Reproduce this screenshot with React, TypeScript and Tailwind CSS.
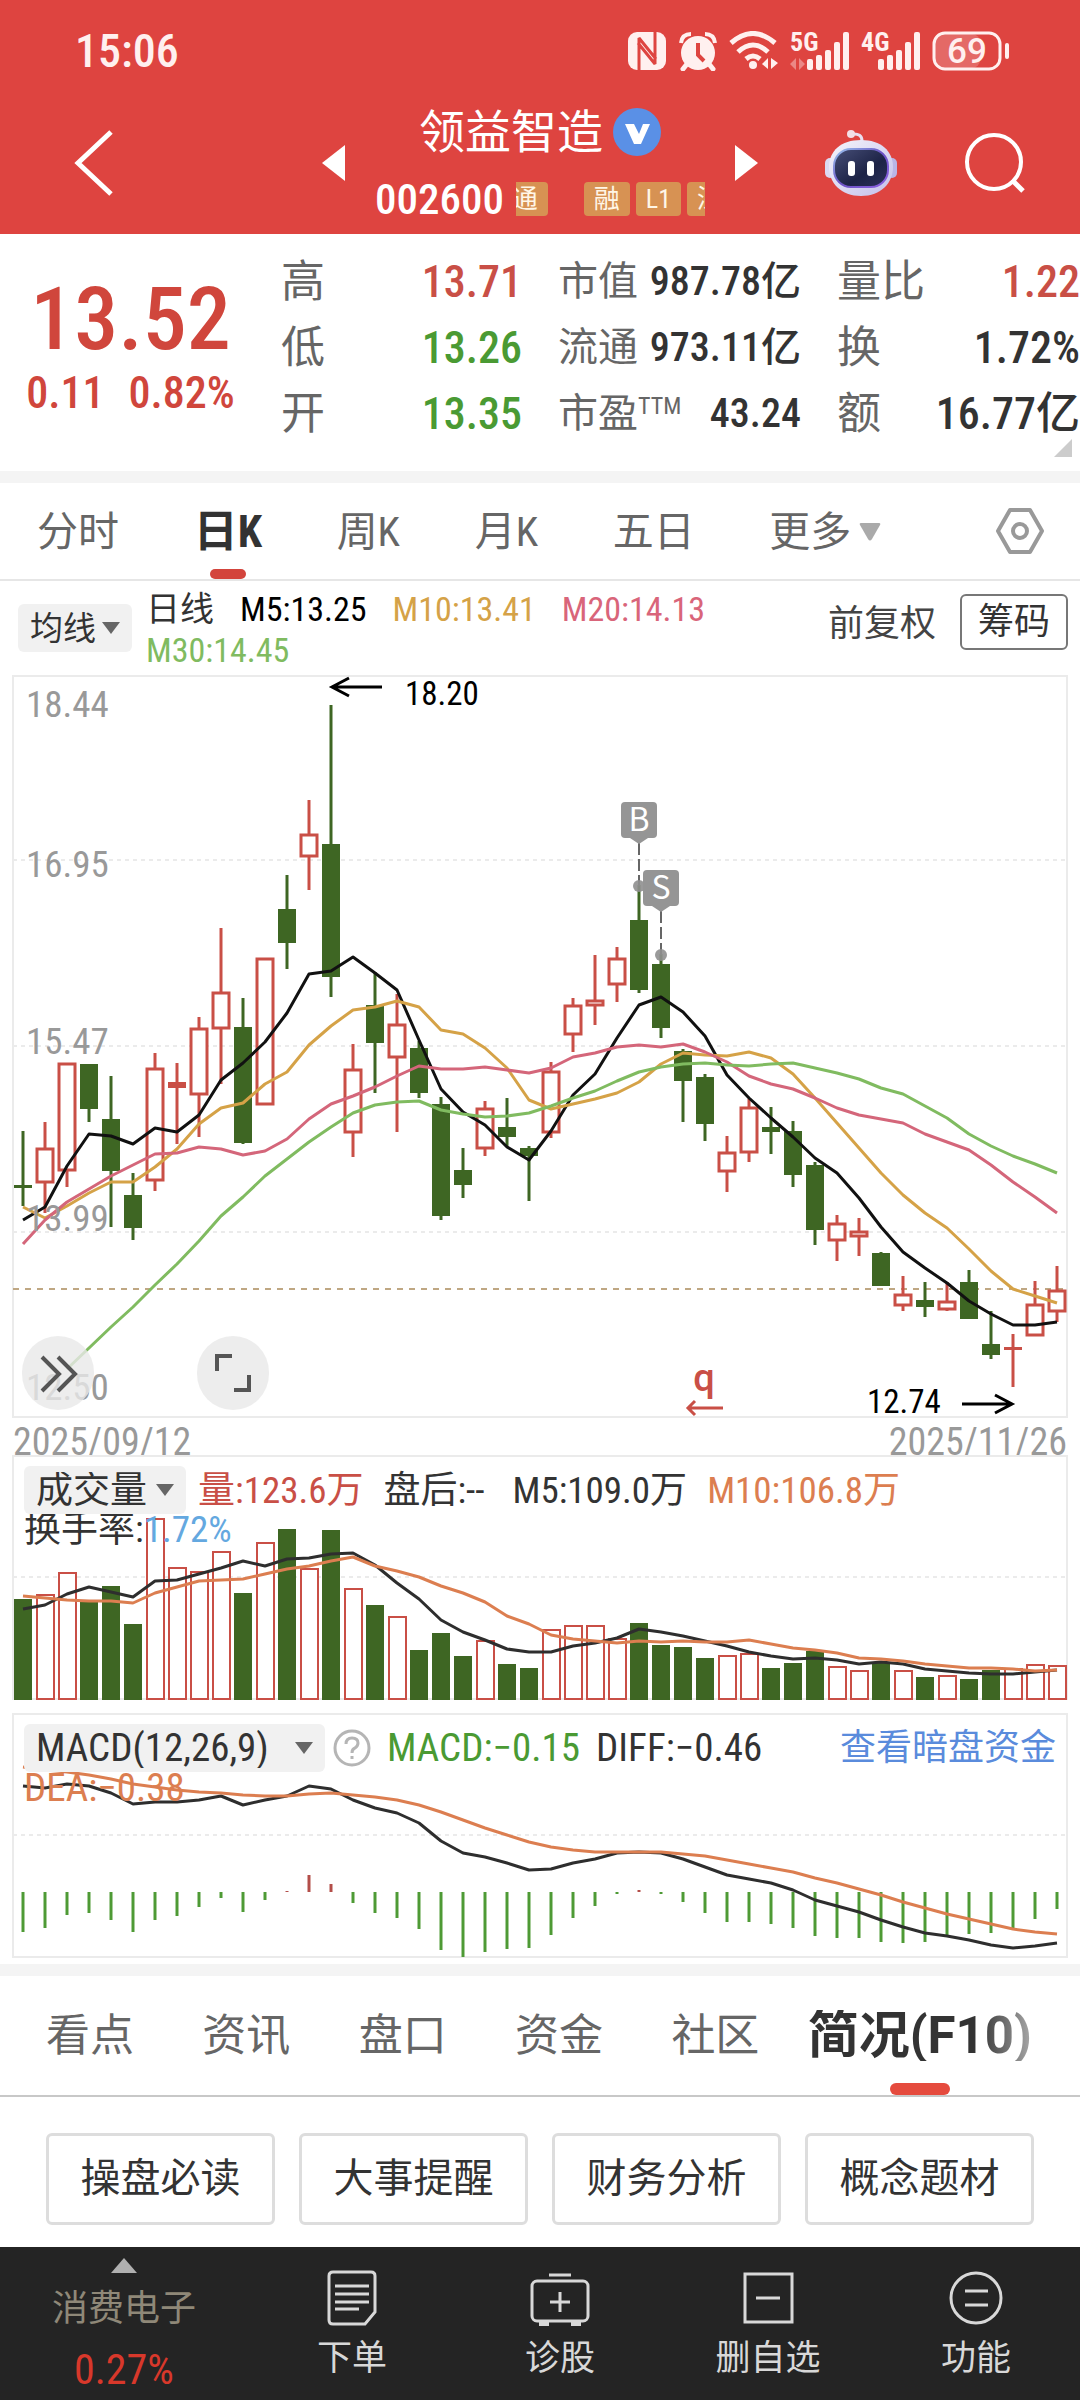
import type { ReactNode } from 'react';

type Candle = [up: 0 | 1, high: number, top: number, bottom: number, low: number];

const candles: Candle[] = [
  [0, 1131, 1185, 1188, 1206], [1, 1122, 1147, 1183, 1213], [1, 1062, 1062, 1171, 1187], [0, 1064, 1064, 1109, 1122],
  [0, 1076, 1119, 1171, 1227], [0, 1173, 1195, 1228, 1240], [1, 1053, 1067, 1181, 1191], [1, 1063, 1082, 1088, 1144],
  [1, 1017, 1027, 1095, 1137], [1, 928, 991, 1029, 1084], [0, 998, 1027, 1143, 1144], [1, 957, 957, 1105, 1105],
  [0, 875, 909, 943, 969], [1, 800, 833, 857, 890], [0, 705, 844, 977, 997], [1, 1044, 1068, 1133, 1157],
  [0, 972, 1005, 1043, 1093], [1, 994, 1023, 1058, 1132], [0, 1041, 1048, 1093, 1098], [0, 1097, 1104, 1216, 1220],
  [0, 1148, 1170, 1185, 1198], [1, 1101, 1107, 1149, 1156], [0, 1098, 1127, 1137, 1147], [0, 1146, 1148, 1156, 1201],
  [1, 1062, 1070, 1133, 1138], [1, 998, 1004, 1035, 1052], [1, 955, 999, 1006, 1025], [1, 947, 957, 985, 1002],
  [0, 885, 920, 990, 993], [0, 954, 964, 1028, 1038], [0, 1049, 1051, 1081, 1122], [0, 1074, 1077, 1124, 1141],
  [1, 1136, 1151, 1172, 1192], [1, 1099, 1106, 1153, 1162], [0, 1107, 1127, 1132, 1154], [0, 1121, 1131, 1175, 1187],
  [0, 1162, 1165, 1230, 1245], [1, 1215, 1222, 1241, 1261], [1, 1218, 1230, 1237, 1256], [0, 1252, 1253, 1286, 1286],
  [1, 1276, 1293, 1306, 1311], [0, 1282, 1300, 1307, 1317], [1, 1282, 1300, 1310, 1311], [0, 1270, 1282, 1319, 1319],
  [0, 1311, 1344, 1355, 1359], [1, 1334, 1347, 1350, 1387], [1, 1281, 1303, 1336, 1336], [1, 1266, 1289, 1312, 1322],
];

const m5 = [1220, 1207, 1166, 1134, 1136, 1144, 1128, 1132, 1115, 1080, 1063, 1042, 1013, 974, 971, 957, 973, 990, 1040, 1089, 1112, 1125, 1147, 1160, 1131, 1095, 1074, 1038, 1005, 997, 1012, 1036, 1075, 1098, 1118, 1137, 1158, 1173, 1198, 1227, 1252, 1268, 1283, 1301, 1314, 1325, 1325, 1322];
const m10 = [1207, 1218, 1206, 1193, 1182, 1182, 1167, 1149, 1124, 1108, 1103, 1084, 1072, 1045, 1026, 1010, 1007, 1001, 1007, 1030, 1034, 1048, 1068, 1100, 1109, 1104, 1099, 1093, 1082, 1064, 1053, 1055, 1056, 1052, 1058, 1074, 1098, 1123, 1148, 1173, 1195, 1213, 1228, 1249, 1271, 1289, 1296, 1303];
const m20 = [1244, 1220, 1202, 1189, 1176, 1165, 1154, 1153, 1147, 1149, 1155, 1151, 1139, 1119, 1104, 1096, 1087, 1076, 1066, 1069, 1069, 1067, 1070, 1073, 1068, 1057, 1053, 1047, 1045, 1047, 1044, 1052, 1062, 1076, 1084, 1089, 1098, 1108, 1115, 1119, 1123, 1134, 1142, 1150, 1165, 1182, 1197, 1213];
const m30 = [1369, 1348, 1327, 1307, 1285, 1264, 1241, 1216, 1197, 1176, 1159, 1142, 1127, 1113, 1105, 1102, 1101, 1110, 1114, 1117, 1116, 1113, 1106, 1098, 1091, 1081, 1072, 1067, 1064, 1063, 1065, 1066, 1064, 1063, 1068, 1073, 1079, 1088, 1094, 1106, 1118, 1134, 1146, 1156, 1164, 1173];

const volume = [1599, 1595, 1573, 1601, 1586, 1624, 1519, 1568, 1572, 1552, 1593, 1543, 1529, 1569, 1530, 1589, 1605, 1617, 1650, 1633, 1656, 1641, 1664, 1668, 1630, 1626, 1626, 1639, 1623, 1645, 1647, 1658, 1656, 1654, 1668, 1663, 1651, 1667, 1671, 1663, 1671, 1677, 1676, 1679, 1670, 1669, 1665, 1666];
const v5 = [1609, 1605, 1594, 1587, 1592, 1597, 1581, 1580, 1574, 1568, 1561, 1566, 1559, 1558, 1554, 1553, 1565, 1583, 1599, 1620, 1632, 1640, 1649, 1652, 1652, 1646, 1643, 1638, 1629, 1632, 1636, 1641, 1646, 1652, 1656, 1659, 1658, 1660, 1664, 1662, 1664, 1669, 1671, 1673, 1674, 1674, 1672, 1670];
const v10 = [1596, 1598, 1600, 1601, 1601, 1603, 1593, 1587, 1581, 1580, 1579, 1574, 1569, 1566, 1561, 1557, 1566, 1571, 1577, 1586, 1593, 1602, 1616, 1624, 1635, 1639, 1641, 1643, 1641, 1642, 1641, 1642, 1642, 1640, 1644, 1648, 1650, 1653, 1658, 1659, 1661, 1664, 1666, 1668, 1668, 1669, 1671, 1670];

const macd = [1932, 1928, 1915, 1913, 1920, 1932, 1920, 1916, 1907, 1898, 1912, 1900, 1891, 1875, 1884, 1903, 1913, 1918, 1929, 1950, 1957, 1952, 1949, 1948, 1935, 1918, 1906, 1894, 1890, 1894, 1902, 1913, 1922, 1922, 1924, 1928, 1936, 1938, 1938, 1942, 1943, 1942, 1937, 1934, 1933, 1929, 1919, 1909];
const diff = [1786, 1788, 1784, 1786, 1793, 1804, 1802, 1802, 1800, 1796, 1805, 1800, 1796, 1786, 1789, 1800, 1808, 1813, 1823, 1841, 1853, 1857, 1863, 1870, 1869, 1863, 1859, 1853, 1852, 1853, 1859, 1867, 1875, 1879, 1883, 1890, 1900, 1906, 1912, 1920, 1927, 1933, 1936, 1940, 1945, 1948, 1946, 1943];
const dea = [1767, 1770, 1772, 1775, 1779, 1784, 1787, 1790, 1792, 1793, 1795, 1796, 1796, 1794, 1793, 1795, 1797, 1800, 1805, 1812, 1820, 1828, 1835, 1842, 1847, 1850, 1852, 1852, 1852, 1852, 1854, 1856, 1860, 1864, 1868, 1872, 1878, 1883, 1889, 1895, 1902, 1908, 1914, 1919, 1924, 1929, 1932, 1934];

const RED = '#c94f46';
const GREEN = '#3e6623';
const FRAME = '#ebebeb';

const xAt = (i: number) => 23 + i * 22;
const points = (ys: number[], from = 0) => ys.map((y, i) => `${xAt(i + from)},${y}`).join(' ');

function Line({ ys, color, from }: { ys: number[]; color: string; from?: number }) {
  return <polyline points={points(ys, from)} fill="none" stroke={color} strokeWidth="3" strokeLinejoin="round" />;
}

function Grid({ y }: { y: number }) {
  return <line x1="13" x2="1067" y1={y} y2={y} stroke={FRAME} strokeWidth="2" strokeDasharray="4 4" />;
}

function Marker({ x, y, dot, label }: { x: number; y: number; dot: number; label: string }) {
  return (
    <g>
      <line x1={x} x2={x} y1={y + 41} y2={dot} stroke="#666" strokeWidth="2" strokeDasharray="12 4" />
      <circle cx={x} cy={dot} r="6" fill="#8f8f8f" fillOpacity="0.9" />
      <rect x={x - 18} y={y} width="36" height="36" rx="4" fill="#959595" />
      <path d={`M${x - 9} ${y + 36}h18l-9 6z`} fill="#959595" />
      <text x={x} y={y + 29} textAnchor="middle" fontSize="32" fill="#fff" className="font-['Noto_Sans_CJK_SC',sans-serif]">{label}</text>
    </g>
  );
}

function PriceChart() {
  return (
    <svg viewBox="0 675 1080 743" className="block h-auto w-full" role="img" aria-label="日K线图">
      <rect x="13" y="676" width="1054" height="741" fill="none" stroke={FRAME} strokeWidth="2" />
      <Grid y={860} />
      <Grid y={1046} />
      <Grid y={1232} />
      <line x1="13" x2="1067" y1="1289" y2="1289" stroke="#bfa783" strokeWidth="2" strokeDasharray="6 6" />
      {candles.map(([up, high, top, bottom, low], i) => {
        const x = xAt(i);
        const color = up ? RED : GREEN;
        const hollow = up === 1 && bottom - top > 6;
        return (
          <g key={i}>
            {high < top && <line x1={x} x2={x} y1={high} y2={top + 1} stroke={color} strokeWidth="3" />}
            {low > bottom && <line x1={x} x2={x} y1={bottom - 1} y2={low} stroke={color} strokeWidth="3" />}
            {hollow ? (
              <rect x={x - 8} y={top + 2} width="16" height={bottom - top - 3} fill="#fff" stroke={color} strokeWidth="3" />
            ) : (
              <rect x={x - 9} y={top} width="18" height={bottom - top} fill={color} />
            )}
          </g>
        );
      })}
      <Line ys={m5} color="#111" />
      <Line ys={m10} color="#d5a247" />
      <Line ys={m20} color="#d4667a" />
      <Line ys={m30} color="#80bb60" from={2} />
      <g fontSize="37" fill="#999" className="font-['Roboto_Condensed','Noto_Sans_CJK_SC',sans-serif]">
        <text x="26" y="717">18.44</text>
        <text x="26" y="877">16.95</text>
        <text x="26" y="1054">15.47</text>
        <text x="26" y="1231">13.99</text>
        <text x="26" y="1400">12.50</text>
      </g>
      <g fontSize="33" fill="#000" className="font-['Roboto_Condensed','Noto_Sans_CJK_SC',sans-serif]">
        <text x="405" y="705">18.20</text>
        <text x="867" y="1413">12.74</text>
      </g>
      <g fill="none" stroke="#000" strokeWidth="3">
        <path d="M382 687H332M349 678l-17 9 17 9" />
        <path d="M962 1404h50M995 1395l17 9-17 9" />
      </g>
      <text x="704" y="1391" textAnchor="middle" fontSize="38" fontWeight="500" fill={RED} className="font-['Roboto',sans-serif]">q</text>
      <path d="M723 1408h-35M695 1401l-7 7 7 7" fill="none" stroke={RED} strokeWidth="3" />
      <Marker x={639} y={802} dot={886} label="B" />
      <Marker x={661} y={870} dot={955} label="S" />
    </svg>
  );
}

function VolumeChart() {
  return (
    <svg viewBox="0 1455 1080 258" className="block h-auto w-full" role="img" aria-label="成交量图">
      <path d="M13 1700V1456H1067V1700M13 1699H1067" fill="none" stroke={FRAME} strokeWidth="2" />
      <Grid y={1577} />
      {volume.map((y, i) =>
        candles[i][0] ? (
          <rect key={i} x={xAt(i) - 8} y={y} width="17" height={1699 - y} fill="#fff" stroke={RED} strokeWidth="2" />
        ) : (
          <rect key={i} x={xAt(i) - 9} y={y} width="18" height={1700 - y} fill={GREEN} />
        ),
      )}
      <Line ys={v5} color="#2e2e2e" />
      <Line ys={v10} color="#dc7e50" />
    </svg>
  );
}

function MacdChart() {
  return (
    <svg viewBox="0 1713 1080 251" className="block h-auto w-full" role="img" aria-label="MACD图">
      <rect x="13" y="1714" width="1054" height="243" fill="none" stroke={FRAME} strokeWidth="2" />
      <Grid y={1835} />
      {macd.map((y, i) => (
        <line key={i} x1={xAt(i)} x2={xAt(i)} y1="1892" y2={y} stroke={y < 1892 ? '#b34e49' : '#4e9a35'} strokeWidth="3" />
      ))}
      <Line ys={diff} color="#2e2e2e" />
      <Line ys={dea} color="#dc7e50" />
    </svg>
  );
}

function Picker({ label, width }: { label: string; width: string }) {
  return (
    <span className={`relative flex h-12 shrink-0 items-center ${width}`}>
      <select aria-label={label} className="h-full w-full appearance-none rounded-md bg-[#f1f1f1] pl-3 text-[#333] outline-none">
        <option>{label}</option>
      </select>
      <svg viewBox="0 0 18 12" className="pointer-events-none absolute right-3 h-3 w-[18px]" fill="#666"><path d="M0 0h18l-9 12z" /></svg>
    </span>
  );
}

function Signal({ label, faint }: { label: string; faint?: boolean }) {
  return (
    <svg viewBox="0 0 60 40" className="h-10 w-[60px] overflow-visible" fill="#fff0ef" aria-label={label}>
      <text x="0" y="20" fontSize="26" fontWeight="700" className="font-['Roboto_Condensed',sans-serif]">{label}</text>
      {faint && <path d="M0 33l6-6v12M9 27v12l6-6z" opacity="0.4" />}
      <rect x="17" y="28" width="6" height="11" rx="2" />
      <rect x="26" y="24" width="6" height="15" rx="2" />
      <rect x="35" y="19" width="6" height="20" rx="2" />
      <rect x="44" y="11" width="6" height="28" rx="2" />
      <rect x="53" y="1" width="6" height="38" rx="2" />
    </svg>
  );
}

function StatusBar() {
  return (
    <div className="flex h-[102px] items-center justify-between pl-[75px] pr-[70px] text-[#fff0ef]">
      <time className="text-[46px] font-medium leading-none">15:06</time>
      <div className="flex items-center gap-[11px]">
        <svg viewBox="0 0 40 40" className="h-10 w-10" aria-label="NFC">
          <rect x="1" y="1" width="38" height="38" rx="9" fill="#fff0ef" />
          <path d="M12 39V7l17 21M28 1v32L11 12" fill="none" stroke="#de4440" strokeWidth="3" strokeLinejoin="bevel" />
        </svg>
        <svg viewBox="0 0 40 40" className="h-10 w-10" aria-label="闹钟">
          <circle cx="20" cy="22" r="17" fill="#fff0ef" />
          <path d="M3 12q1-9 10-9M37 12q-1-9-10-9" fill="none" stroke="#fff0ef" strokeWidth="4" />
          <path d="M9 33l-4 5M31 33l4 5" stroke="#fff0ef" strokeWidth="5" strokeLinecap="round" />
          <path d="M20 12v12l6 6" fill="none" stroke="#de4440" strokeWidth="4" />
        </svg>
        <svg viewBox="0 0 50 40" className="h-10 w-[50px]" fill="none" stroke="#fff0ef" strokeWidth="5" aria-label="Wi-Fi">
          <path d="M2 12q22-19 44 0M9 21q15-14 30 0M17 28q7-6 14 0" />
          <circle cx="24" cy="34" r="4" fill="#fff0ef" stroke="none" />
          <path d="M33 33l6-6v11zM42 27v11l7-6z" fill="#fff0ef" stroke="none" />
        </svg>
        <Signal label="5G" faint />
        <Signal label="4G" />
        <svg viewBox="0 0 78 40" className="h-10 w-[78px]" aria-label="电量69">
          <rect x="2" y="3" width="46" height="34" rx="8" fill="#fff" opacity="0.2" />
          <rect x="2" y="2" width="66" height="36" rx="11" fill="none" stroke="#fff0ef" strokeWidth="3" />
          <path d="M75 14v12" stroke="#fff0ef" strokeWidth="4" strokeLinecap="round" />
          <text x="35" y="32" textAnchor="middle" fontSize="35" fontWeight="500" fill="#fff0ef" className="font-['Roboto',sans-serif]">69</text>
        </svg>
      </div>
    </div>
  );
}

function Tag({ children }: { children: ReactNode }) {
  return <span className="flex h-[34px] shrink-0 items-center whitespace-nowrap rounded-sm bg-[#d79253] px-2.5 text-[26px] leading-none text-[#fff6e6]">{children}</span>;
}

function TitleBar() {
  return (
    <div className="grid grid-cols-[1fr_auto_1fr] items-center pb-3.5 pt-1">
      <button aria-label="返回" className="ml-[74px] w-10">
        <svg viewBox="0 0 40 68" className="h-[68px] w-10" fill="none" stroke="#fff" strokeWidth="5"><path d="M37 3L4 34l33 31" /></svg>
      </button>
      <div className="flex items-center gap-[30px]">
        <button aria-label="上一只">
          <svg viewBox="0 0 23 36" className="h-9 w-[23px]" fill="#fff"><path d="M23 0v36L0 18z" /></svg>
        </button>
        <div className="flex w-[330px] flex-col gap-5">
          <h1 className="flex h-[52px] items-center justify-center gap-2.5 text-[46px] font-normal leading-none text-white">
            领益智造
            <svg viewBox="0 0 48 48" className="h-12 w-12" aria-label="认证">
              <circle cx="24" cy="24" r="24" fill="#5a90e6" />
              <path d="M12 16h9l5 10 4-10h7l-9 20h-7z" fill="#fff" />
            </svg>
          </h1>
          <div className="flex h-[42px] items-center gap-3">
            <span className="text-[43px] font-medium leading-none text-white">002600</span>
            <div className="flex min-w-0 flex-1 justify-end gap-1.5 overflow-hidden">
              <span className="mr-[30px]"><Tag>深股通</Tag></span>
              <Tag>融</Tag>
              <Tag>L1</Tag>
              <span className="-mr-20"><Tag>深股通</Tag></span>
            </div>
          </div>
        </div>
        <button aria-label="下一只">
          <svg viewBox="0 0 23 36" className="h-9 w-[23px]" fill="#fff"><path d="M0 0v36l23-18z" /></svg>
        </button>
      </div>
      <div className="flex items-center justify-end gap-[66px] pr-[54px]">
        <button aria-label="智能助手">
          <svg viewBox="0 0 74 68" className="h-[68px] w-[74px]">
            <defs>
              <linearGradient id="shell" x1="0" y1="0" x2="1" y2="1"><stop offset="0" stopColor="#f6f4fb" /><stop offset="1" stopColor="#c3c0ea" /></linearGradient>
              <linearGradient id="visor" x1="0" y1="0" x2="1" y2="1"><stop offset="0" stopColor="#474f78" /><stop offset="0.6" stopColor="#1d2346" /><stop offset="1" stopColor="#2b3159" /></linearGradient>
              <linearGradient id="rim" x1="0" y1="0" x2="1" y2="1"><stop offset="0" stopColor="#9bc5ee" /><stop offset="0.5" stopColor="#6b52c4" /><stop offset="1" stopColor="#8a5fe0" /></linearGradient>
            </defs>
            <path d="M38 12q0-8-10-7" fill="none" stroke="#e9dff0" strokeWidth="3" />
            <circle cx="27" cy="5" r="4" fill="#f3dfe6" />
            <rect x="1" y="29" width="10" height="20" rx="5" fill="#dcd9f2" />
            <rect x="63" y="29" width="10" height="20" rx="5" fill="#b9b5e6" />
            <path d="M37 11C57 11 69 22 69 38S57 67 37 67 5 54 5 38 17 11 37 11z" fill="url(#shell)" />
            <rect x="10" y="20" width="54" height="38" rx="17" fill="url(#visor)" stroke="url(#rim)" strokeWidth="2" />
            <rect x="24" y="32" width="7" height="15" rx="3" fill="#fff" />
            <rect x="43" y="32" width="7" height="15" rx="3" fill="#fff" />
          </svg>
        </button>
        <button aria-label="搜索">
          <svg viewBox="0 0 62 62" className="h-[62px] w-[62px]" fill="none" stroke="#fff" strokeWidth="4"><circle cx="30" cy="30" r="27" /><path d="M48 48l11 11" strokeWidth="5" /></svg>
        </button>
      </div>
    </div>
  );
}

function Stat({ label, sup, value, tone = 'text-[#333]', size = 'text-[44px]' }: { label: string; sup?: string; value: string; tone?: string; size?: string }) {
  return (
    <div className={`flex h-[66px] items-center justify-between whitespace-nowrap ${size}`}>
      <dt className="flex leading-none text-[#666]">{label}{sup && <sup className="top-0 text-[24px] leading-none">{sup}</sup>}</dt>
      <dd className={`font-medium leading-none ${tone}`}>{value}</dd>
    </div>
  );
}

function Quote() {
  return (
    <section className="relative grid grid-cols-[244fr_240fr_242fr_242fr] gap-x-9 bg-white pb-6 pt-[15px]">
      <div className="flex flex-col items-center pl-4 pt-[22px] font-medium text-[#d0463c]">
        <strong className="text-[88px] font-medium leading-[96px]">13.52</strong>
        <p className="flex gap-6 text-[44px] leading-[52px]"><span>0.11</span><span>0.82%</span></p>
      </div>
      <dl>
        <Stat label="高" value="13.71" tone="text-[#c94f46]" />
        <Stat label="低" value="13.26" tone="text-[#4a9a33]" />
        <Stat label="开" value="13.35" tone="text-[#4a9a33]" />
      </dl>
      <dl>
        <Stat label="市值" value="987.78亿" size="text-[40px]" />
        <Stat label="流通" value="973.11亿" size="text-[40px]" />
        <Stat label="市盈" sup="TTM" value="43.24" size="text-[40px]" />
      </dl>
      <dl>
        <Stat label="量比" value="1.22" tone="text-[#c94f46]" />
        <Stat label="换" value="1.72%" />
        <Stat label="额" value="16.77亿" />
      </dl>
      <svg viewBox="0 0 18 18" className="absolute bottom-3.5 right-2 h-[18px] w-[18px]" fill="#ccc"><path d="M18 0v18H0z" /></svg>
    </section>
  );
}

function PeriodTabs() {
  const tab = 'flex h-24 items-center pt-0.5 text-[41px] leading-none text-[#666]';
  return (
    <nav className="flex items-center justify-between border-b-2 border-[#e6e6e6] pl-[37px] pr-9">
      <button className={tab}>分时</button>
      <button className="relative flex h-24 items-center pt-0.5 text-[44px] font-bold leading-none text-[#333]">
        日K
        <span className="absolute bottom-0 left-1/2 h-2.5 w-9 -translate-x-1/2 rounded-full bg-[#d3443c]" />
      </button>
      <button className={tab}>周K</button>
      <button className={tab}>月K</button>
      <button className={tab}>五日</button>
      <button className="flex h-24 items-center gap-2 pt-0.5 text-[41px] leading-none text-[#666]">
        更多
        <svg viewBox="0 0 22 18" className="h-[18px] w-[22px]" fill="#aaa"><path d="M2 0h18q2 0 1 2l-8 14q-2 3-4 0L1 2Q0 0 2 0z" /></svg>
      </button>
      <button aria-label="设置" className="ml-10">
        <svg viewBox="0 0 48 46" className="h-[46px] w-12" fill="none" stroke="#999" strokeWidth="4" strokeLinejoin="round"><path d="M14 2h20l12 21-12 21H14L2 23z" /><circle cx="24" cy="23" r="7" /></svg>
      </button>
    </nav>
  );
}

function Averages() {
  return (
    <div className="flex items-center pb-1 pl-[18px] pr-3 pt-2">
      <span className="mb-1 flex text-[33px] leading-none"><Picker label="均线" width="w-[114px]" /></span>
      <p className="ml-3.5 flex min-w-0 flex-1 flex-wrap gap-x-[26px] text-[34px] leading-[41px]">
        <span className="text-[#333]">日线</span>
        <span className="text-black">M5:13.25</span>
        <span className="text-[#d5a247]">M10:13.41</span>
        <span className="text-[#d9657a]">M20:14.13</span>
        <span className="text-[#80bb60]">M30:14.45</span>
      </p>
      <button className="mb-3 text-[36px] leading-none text-[#444]">前复权</button>
      <button className="mb-4 ml-6 flex h-14 w-[108px] items-center justify-center rounded-md border-2 border-[#777] text-[36px] leading-none text-[#333]">筹码</button>
    </div>
  );
}

function RoundButton({ label, place, children }: { label: string; place: string; children: ReactNode }) {
  return (
    <button aria-label={label} className={`absolute bottom-2 h-[74px] w-[72px] rounded-full bg-[#e9e9e9]/80 ${place}`}>
      <svg viewBox="0 0 72 74" className="h-full w-full" fill="none" stroke="#555" strokeWidth="4">{children}</svg>
    </button>
  );
}

function Charts() {
  return (
    <section>
      <div className="relative">
        <PriceChart />
        <RoundButton label="展开" place="left-[2%]"><path d="M20 21l17 17-17 17M36 21l17 17-17 17" /></RoundButton>
        <RoundButton label="全屏" place="left-[18.2%]"><path d="M20 35V20h15M52 39v15H37" /></RoundButton>
      </div>
      <div className="flex h-[37px] items-center justify-between px-[13px] pt-2.5 text-[38px] leading-none text-[#999]">
        <span>2025/09/12</span>
        <span>2025/11/26</span>
      </div>
      <div className="relative">
        <VolumeChart />
        <div className="absolute inset-x-6 top-[11px] text-[37px] leading-none text-[#333]">
          <div className="flex h-12 items-center">
            <Picker label="成交量" width="w-[162px]" />
            <span className="ml-3 text-[#c94f46]">量:123.6万</span>
            <span className="ml-5">盘后:--</span>
            <span className="ml-7">M5:109.0万</span>
            <span className="ml-5 text-[#dc7e50]">M10:106.8万</span>
          </div>
          <p className="leading-8">换手率:<span className="text-[#64a8e0]">1.72%</span></p>
        </div>
      </div>
      <div className="relative">
        <MacdChart />
        <div className="absolute inset-x-6 top-[11px] text-[39px] leading-none text-[#333]">
          <div className="flex h-12 items-center">
            <Picker label="MACD(12,26,9)" width="w-[301px]" />
            <button aria-label="指标说明" className="ml-2">
              <svg viewBox="0 0 38 38" className="h-[38px] w-[38px]" fill="none" stroke="#b5b5b5" strokeWidth="3"><circle cx="19" cy="19" r="17" /><path d="M13 15q0-6 6-6t6 5q0 3-3 5-3 1-3 5M19 27v3" /></svg>
            </button>
            <span className="ml-4 text-[#4a9a33]">MACD:−0.15</span>
            <span className="ml-4">DIFF:−0.46</span>
            <a href="#dark" className="ml-auto text-[36px] text-[#5a8bdc]">查看暗盘资金</a>
          </div>
          <p className="leading-8 text-[#dc7e50]">DEA:−0.38</p>
        </div>
      </div>
    </section>
  );
}

function InfoTabs() {
  return (
    <nav className="flex h-[121px] items-center justify-between border-b-2 border-[#c8c8c8] pl-[46px] pr-12 text-[44px] leading-none text-[#666]">
      {['看点', '资讯', '盘口', '资金', '社区'].map((t) => (
        <button key={t}>{t}</button>
      ))}
      <button className="relative -ml-5 flex h-full items-center font-['Roboto','Noto_Sans_CJK_SC',sans-serif] text-[51px] font-bold">
        <span className="bg-linear-to-r from-[#333] from-75% to-[#aaa] bg-clip-text text-transparent">简况(F10)</span>
        <span className="absolute bottom-0 left-1/2 h-3 w-[60px] -translate-x-1/2 rounded-full bg-[#e54b3e]" />
      </button>
    </nav>
  );
}

function Shortcuts() {
  return (
    <div className="grid grid-cols-4 gap-6 px-[46px] pb-[22px] pt-9">
      {['操盘必读', '大事提醒', '财务分析', '概念题材'].map((t) => (
        <button key={t} className="h-[92px] rounded-md border-3 border-[#ddd] text-[40px] leading-none text-[#333]">{t}</button>
      ))}
    </div>
  );
}

function NavItem({ label, children }: { label: string; children: ReactNode }) {
  return (
    <button className="flex flex-col items-center gap-3 pt-[22px] text-[35px] leading-10 text-[#d8d8d8]">
      <svg viewBox="0 0 60 58" className="h-[58px] w-[60px]" fill="none" stroke="#d8d8d8" strokeWidth="3">{children}</svg>
      {label}
    </button>
  );
}

function BottomBar() {
  return (
    <nav className="grid grid-cols-[248fr_208fr_208fr_208fr_208fr] items-start bg-[#242424] pb-2.5">
      <button className="flex flex-col items-center pt-[11px] leading-none">
        <svg viewBox="0 0 26 15" className="h-[15px] w-[26px]" fill="#b0b0b0"><path d="M13 0l13 15H0z" /></svg>
        <span className="mt-4 text-[36px] leading-10 text-[#8f8878]">消费电子</span>
        <span className="mt-[21px] text-[42px] leading-10 text-[#d8382b]">0.27%</span>
      </button>
      <NavItem label="下单">
        <path d="M11 3h38q4 0 4 4v36L43 55H11q-4 0-4-4V7q0-4 4-4z" />
        <path d="M13 17h34M13 25h34M13 33h34M13 40h24" />
      </NavItem>
      <NavItem label="诊股">
        <rect x="2" y="12" width="56" height="40" rx="5" />
        <path d="M19 6h22M30 23v20M20 33h20" />
        <path d="M9 55h10M41 55h10" strokeWidth="4" />
      </NavItem>
      <NavItem label="删自选">
        <rect x="7" y="5" width="47" height="48" />
        <path d="M18 29h24" />
      </NavItem>
      <NavItem label="功能">
        <circle cx="30" cy="29" r="25" />
        <path d="M19 22h23M19 36h23" />
      </NavItem>
    </nav>
  );
}

export default function App() {
  return (
    <main className="w-full bg-white font-['Roboto_Condensed','Noto_Sans_CJK_SC',sans-serif]">
      <header className="bg-[#de4440]">
        <StatusBar />
        <TitleBar />
      </header>
      <Quote />
      <div className="h-3 bg-[#f4f4f4]" />
      <PeriodTabs />
      <Averages />
      <Charts />
      <div className="h-3 bg-[#f4f4f4]" />
      <InfoTabs />
      <Shortcuts />
      <BottomBar />
    </main>
  );
}
